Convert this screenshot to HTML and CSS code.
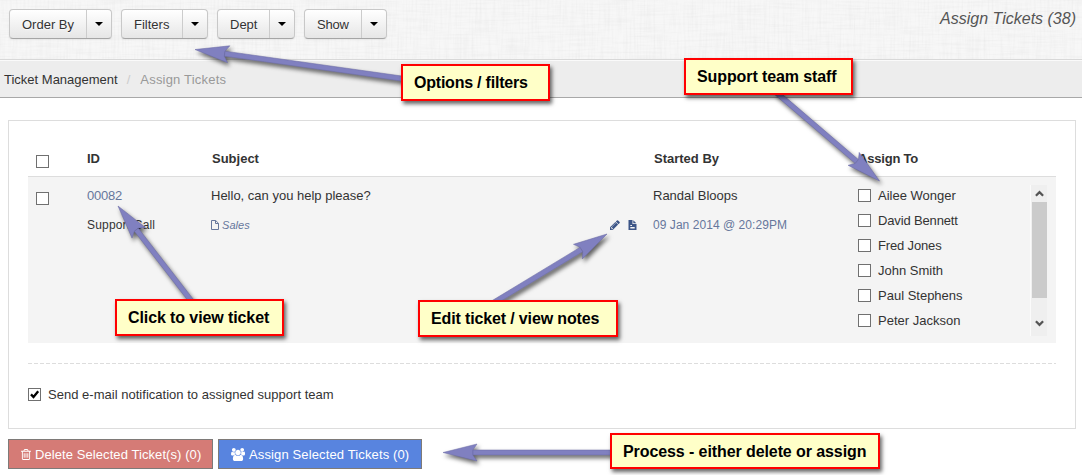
FILE: index.html
```
<!DOCTYPE html>
<html lang="en">
<head>
<meta charset="utf-8">
<title>Assign Tickets</title>
<link rel="stylesheet" href="styles.css">
</head>
<body>
<div class="page">
  <header class="toolbar">
    <svg class="linen" width="1082" height="59" aria-hidden="true">
      <filter id="weaveH" x="0" y="0" width="100%" height="100%"><feTurbulence type="fractalNoise" baseFrequency="0.03 0.5" numOctaves="2" seed="4"/><feColorMatrix values="0 0 0 0 0.5  0 0 0 0 0.5  0 0 0 0 0.5  0.22 0 0 0 -0.09"/></filter>
      <filter id="weaveV" x="0" y="0" width="100%" height="100%"><feTurbulence type="fractalNoise" baseFrequency="0.5 0.03" numOctaves="2" seed="9"/><feColorMatrix values="0 0 0 0 0.5  0 0 0 0 0.5  0 0 0 0 0.5  0.22 0 0 0 -0.09"/></filter>
      <rect width="1082" height="59" filter="url(#weaveH)"/>
      <rect width="1082" height="59" filter="url(#weaveV)"/>
    </svg>
    <div class="groups">
      <div class="group"><span class="label w-order">Order By</span><span class="toggle"><i class="caret"></i></span></div>
      <div class="group"><span class="label w-filters">Filters</span><span class="toggle"><i class="caret"></i></span></div>
      <div class="group"><span class="label w-dept">Dept</span><span class="toggle"><i class="caret"></i></span></div>
      <div class="group"><span class="label w-show">Show</span><span class="toggle"><i class="caret"></i></span></div>
    </div>
    <h1 class="title">Assign Tickets (38)</h1>
  </header>
  <nav class="crumbs"><a class="crumb">Ticket Management</a><span class="slash">/</span><span class="current">Assign Tickets</span></nav>

  <main class="panel">
    <div class="row head">
      <span><i class="box head-box"></i></span>
      <span>ID</span><span class="h-subject">Subject</span><span class="h-started">Started By</span><span class="h-assign">Assign To</span>
    </div>
    <div class="row ticket">
      <div><i class="box row-box"></i></div>
      <div><p class="link id">00082</p><p class="priority">Support Call</p></div>
      <div class="subject">
        <p>Hello, can you help please?</p>
        <p class="meta">
          <svg class="doc" viewBox="0 0 8 10"><path d="M.5 .5H4.7L7.5 3.3V9.5H.5ZM4.5 .5V3.5H7.5" fill="none" stroke="currentColor"/></svg>
          <em>Sales</em>
          <span class="tools">
            <svg class="pencil" viewBox="128 128 1536 1536"><path fill="currentColor" d="M491 1536l91-91-235-235-91 91v107h128v128h107zm523-928q0-22-22-22-10 0-17 7l-542 542q-7 7-7 17 0 22 22 22 10 0 17-7l542-542q7-7 7-17zm-54-192l416 416-832 832h-416v-416zm683 96q0 53-37 90l-166 166-416-416 166-165q36-38 90-38 53 0 91 38l235 234q37 39 37 91z"/></svg>
            <svg class="note" viewBox="0 0 9 10"><path fill="currentColor" fill-rule="evenodd" d="M.5 0H4.5V4H8.5V10H.5ZM5.3 .2L8.3 3.2H5.3ZM2.3 5H4V6H2.3ZM2.3 7H6.7V8.5H2.3Z"/></svg>
          </span>
        </p>
      </div>
      <div><p>Randal Bloops</p><p class="link date">09 Jan 2014 @ 20:29PM</p></div>
      <div class="assign">
        <div class="staff">
          <label><i class="box"></i>Ailee Wonger</label>
          <label class="tight"><i class="box"></i>David Bennett</label>
          <label class="tight"><i class="box"></i>Fred Jones</label>
          <label><i class="box"></i>John Smith</label>
          <label><i class="box"></i>Paul Stephens</label>
          <label><i class="box"></i>Peter Jackson</label>
        </div>
        <div class="scroll">
          <svg viewBox="0 0 8 6"><path d="M.8 5L4 1.8L7.2 5" fill="none" stroke="#555" stroke-width="2"/></svg>
          <i class="thumb"></i>
          <svg viewBox="0 0 8 6"><path d="M.8 1L4 4.2L7.2 1" fill="none" stroke="#555" stroke-width="2"/></svg>
        </div>
      </div>
    </div>
    <svg class="dashes" width="1028" height="1"><path d="M0 .5H1028" stroke="#ddd" stroke-dasharray="4 2"/></svg>
    <label class="notify"><i class="box"><svg viewBox="0 0 11 11"><path d="M2 5.4L4.5 8L9.2 2.3" fill="none" stroke="#000" stroke-width="2.3"/></svg></i><span>Send e-mail notification to assigned support team</span></label>
  </main>

  <div class="actions">
    <button class="btn delete"><svg viewBox="192 128 1408 1536"><path fill="currentColor" d="M704 736v576q0 14-9 23t-23 9h-64q-14 0-23-9t-9-23v-576q0-14 9-23t23-9h64q14 0 23 9t9 23zm256 0v576q0 14-9 23t-23 9h-64q-14 0-23-9t-9-23v-576q0-14 9-23t23-9h64q14 0 23 9t9 23zm256 0v576q0 14-9 23t-23 9h-64q-14 0-23-9t-9-23v-576q0-14 9-23t23-9h64q14 0 23 9t9 23zm128 724v-948h-896v948q0 22 7 40.5t14.5 27 10.5 8.5h832q3 0 10.5-8.5t14.5-27 7-40.5zm-672-1076h448l-48-117q-7-9-17-11h-317q-10 2-17 11zm928 32v64q0 14-9 23t-23 9h-96v948q0 83-47 143.5t-113 60.5h-832q-66 0-113-58.5t-47-141.5v-952h-96q-14 0-23-9t-9-23v-64q0-14 9-23t23-9h309l70-167q15-37 54-63t79-26h320q40 0 79 26t54 63l70 167h309q14 0 23 9t9 23z"/></svg><span>Delete Selected Ticket(s) (0)</span></button>
    <button class="btn assign-btn"><svg viewBox="0 0 1920 1792"><path fill="currentColor" d="M593 896q-162 5-265 128h-134q-82 0-138-40.5t-56-118.5q0-353 124-353 6 0 43.5 21t97.5 42.5 119 21.5q67 0 133-23-5 37-5 66 0 159 93 287zm1071 637q0 120-73 189.5t-194 69.5h-874q-121 0-194-69.5t-73-189.5q0-53 3.5-103.5t14-109 26.5-108.5 43-97.5 62-81 85.5-53.5 111.5-20q10 0 43 21.5t73 48 107 48 135 21.5 135-21.5 107-48 73-48 43-21.5q61 0 111.5 20t85.5 53.5 62 81 43 97.5 26.5 108.5 14 109 3.5 103.5zm-1024-1277q0 106-75 181t-181 75-181-75-75-181 75-181 181-75 181 75 75 181zm704 384q0 159-112.5 271.5t-271.5 112.5-271.5-112.5-112.5-271.5 112.5-271.5 271.5-112.5 271.5 112.5 112.5 271.5zm576 225q0 78-56 118.5t-138 40.5h-134q-103-123-265-128 93-128 93-287 0-29-5-66 66 23 133 23 59 0 119-21.5t97.5-42.5 43.5-21q124 0 124 353zm-128-609q0 106-75 181t-181 75-181-75-75-181 75-181 181-75 181 75 75 181z"/></svg><span>Assign Selected Tickets (0)</span></button>
  </div>

  <svg class="arrows" width="1082" height="475" aria-hidden="true">
    <defs><path id="head" d="M0 0L34 -8.5L30 -2.7V2.7L34 8.5Z"/></defs>
    <g fill="#8080c0" stroke="#6a6aa5" stroke-width=".5">
      <g transform="translate(195 49.5) rotate(8)"><use href="#head"/><path d="M30 -2.5H212V2.5H30Z"/></g>
      <g transform="translate(879.5 181) rotate(220.6)"><use href="#head"/><path d="M30 -2.5H136V2.5H30Z"/></g>
      <g transform="translate(118 206) rotate(52.3)"><use href="#head"/><path d="M30 -2.5H122V2.5H30Z"/></g>
      <g transform="translate(607 234) rotate(148.8)"><use href="#head"/><path d="M30 -2.5H134V2.5H30Z"/></g>
      <g transform="translate(443 452.5)"><use href="#head"/><path d="M30 -2.5H170V2.5H30Z"/></g>
    </g>
  </svg>
  <div class="note-box c1">Options / filters</div>
  <div class="note-box c2">Support team staff</div>
  <div class="note-box c3">Click to view ticket</div>
  <div class="note-box c4">Edit ticket / view notes</div>
  <div class="note-box c5">Process - either delete or assign</div>
</div>
</body>
</html>
```
FILE: styles.css
```
* { box-sizing: border-box; }
body { margin: 0; background: #fff; color: #333; font: 13px/20px "Liberation Sans", Arial, sans-serif; overflow: hidden; }
p, h1 { margin: 0; }
.page { position: relative; width: 1082px; height: 475px; overflow: hidden; }
.toolbar { position: relative; height: 60px; background: #f7f7f7; border-bottom: 1px solid #d8d8d8; display: flex; justify-content: space-between; padding: 9px 6px 0 9px; }
.linen { position: absolute; left: 0; top: 0; }
.groups { position: relative; display: flex; gap: 9px; align-items: flex-start; }
.group { display: flex; height: 30px; border: 1px solid #c8c8c8; border-bottom-color: #a5a5a5; border-radius: 4px; background: linear-gradient(#fff, #e6e6e6); box-shadow: 0 1px 2px rgba(0,0,0,.06); text-shadow: 0 1px 1px rgba(255,255,255,.75); }
.label { padding: 5px 0 0 12px; line-height: 20px; white-space: nowrap; }
.w-order { width: 76px; }
.w-filters { width: 60px; }
.w-dept { width: 51px; }
.w-show { width: 56px; letter-spacing: -.2px; }
.toggle { width: 25px; border-left: 1px solid #ccc; display: flex; justify-content: center; padding-top: 12px; }
.caret { width: 0; height: 0; border: 4px solid transparent; border-top-color: #000; border-bottom: 0; }
.title { position: relative; font-weight: normal; font-style: italic; font-size: 16px; line-height: 20px; color: #555; }
.crumbs { height: 38px; background: #ededed; border-bottom: 1px solid #a8a8a8; box-shadow: inset 0 1px #fafafa; padding: 10px 4px 0; display: flex; }
.slash { color: #ccc; padding: 0 9px; }
.current { color: #999; padding-left: 1px; letter-spacing: .2px; }
.panel { margin: 22px 6px 0 8px; height: 309px; border: 1px solid #ddd; padding: 19px; }
.row { display: grid; grid-template-columns: 59px 124px 442px 205px 1fr; }
.head { height: 37px; border-bottom: 1px solid #ddd; font-weight: bold; padding-top: 9px; }
.h-subject, .h-started { padding-left: 1px; }
.h-assign { letter-spacing: -.2px; }
.box { display: block; flex: none; width: 13px; height: 13px; border: 1px solid #707070; background: #fff; }
.head-box { margin: 6px 0 0 8px; }
.row-box { margin: 15px 0 0 8px; }
.ticket { height: 166px; background: #f4f4f4; }
.ticket p { height: 29px; line-height: 20px; white-space: nowrap; }
.ticket > div { padding-top: 9px; }
.ticket > div:first-child { padding-top: 0; }
.link { color: #66779c; }
.id { letter-spacing: -.2px; }
.priority { font-size: 12px; letter-spacing: .18px; }
.date { font-size: 12px; letter-spacing: .05px; }
.meta { display: flex; align-items: flex-start; color: #66779c; font-size: 11px; }
.meta em { letter-spacing: .05px; }
.doc { width: 8px; height: 10px; margin: 5px 3px 0 0; }
.tools { margin-left: auto; display: flex; gap: 8px; padding: 5px 16px 0 0; color: #3c5587; }
.pencil { width: 10px; height: 10px; }
.note { width: 9px; height: 10px; }
.ticket > .assign { display: flex; padding: 8px 9px 8px 0; }
.staff { flex: 1; padding-top: 1px; }
.staff label { display: flex; height: 25px; gap: 7px; align-items: flex-start; }
.staff .tight { letter-spacing: -.15px; }
.staff .box { margin-top: 3px; }
.scroll { width: 17px; border-left: 1px solid #fbfbfb; background: #efefef; display: flex; flex-direction: column; align-items: center; padding: 5px 0 8px; }
.scroll svg { width: 9px; height: 7px; flex: none; }
.thumb { width: 15px; height: 96px; flex: none; background: #cbcbcb; margin: 5px 0 22px; }
.dashes { display: block; margin-top: 20px; }
.notify { display: flex; gap: 7px; align-items: flex-start; margin-top: 21px; letter-spacing: .02px; }
.notify .box { margin-top: 3px; }
.notify svg { display: block; width: 11px; height: 11px; }
.actions { display: flex; gap: 5px; padding: 10px 8px; }
.btn { display: flex; align-items: center; height: 30px; border: 1px solid #7e7a78; padding: 1px 0 0 12px; color: #fff; font: 13px/20px "Liberation Sans", Arial, sans-serif; letter-spacing: .08px; white-space: nowrap; }
.delete { width: 205px; background: #d57b76; gap: 4px; }
.delete svg { width: 10px; height: 11px; }
.assign-btn { width: 204px; background: #5884df; gap: 4px; letter-spacing: .13px; }
.assign-btn svg { width: 14px; height: 13px; }
.arrows { position: absolute; left: 0; top: 0; filter: drop-shadow(2px 3px 2px rgba(0,0,0,.6)); }
.note-box { position: absolute; height: 37px; border: 2px solid #f00; background: #ffffc8; color: #000; font: bold 16px/33px "Liberation Sans", Arial, sans-serif; padding-left: 11px; white-space: nowrap; box-shadow: 2px 3px 4px rgba(0,0,0,.6); }
.c1 { left: 401px; top: 64px; width: 149px; letter-spacing: -.22px; }
.c2 { left: 684px; top: 58px; width: 169px; letter-spacing: -.1px; }
.c3 { left: 115px; top: 299px; width: 169px; letter-spacing: -.1px; }
.c4 { left: 418px; top: 300px; width: 200px; letter-spacing: -.14px; }
.c5 { left: 610px; top: 433px; width: 270px; height: 36px; letter-spacing: -.09px; }
```
